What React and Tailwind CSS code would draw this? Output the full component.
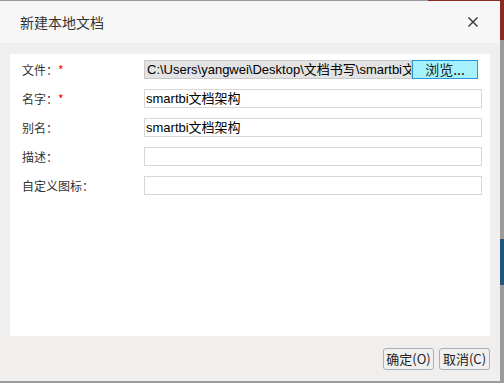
import React from "react";

const cjk = { fontFamily: '"Noto Sans CJK SC", "Liberation Sans", sans-serif' };
const mixed = { fontFamily: '"Liberation Sans", "Noto Sans CJK SC", sans-serif' };

const Field = ({ label, required, children }) => (
  <div className="flex h-[29px] items-center">
    <div className="w-[134px] shrink-0 pl-[12px] text-[12px] leading-none text-[#333]" style={cjk}>
      {label}
      {required && <span className="text-[#ff0000]">*</span>}
    </div>
    {children}
  </div>
);

const TextBox = ({ value = "" }) => (
  <div
    className="flex h-[19px] w-[338px] items-center border border-[#d9d7d3] bg-white px-[1px] text-[13px] text-black"
    style={mixed}
  >
    {value}
  </div>
);

export default function App() {
  return (
    <div className="flex h-[383px] w-[504px] overflow-hidden bg-[#9b9b9b]">
      {/* dialog */}
      <div className="flex h-[381px] w-[500px] flex-col">
        <div className="flex h-px">
          <div className="w-[428px] bg-[#9a9a9a]" />
          <div className="flex-1 bg-[#8b2a1f]" />
        </div>
        <div className="flex h-[42px] items-center justify-between bg-[#f7f7f7] pl-[20px] pr-[22px]">
          <span className="text-[14px] text-[#333]" style={cjk}>新建本地文档</span>
          <svg width="10" height="10" viewBox="0 0 10 10">
            <path d="M0.5 0.5 L9.5 9.5 M9.5 0.5 L0.5 9.5" stroke="#333" strokeWidth="1.4" />
          </svg>
        </div>
        <div className="flex flex-1 flex-col bg-[#f0efed] px-[10px] pt-[11px]">
          <div className="flex h-[282px] flex-col bg-white pt-px">
            <Field label="文件：" required>
              <div className="flex items-center">
                <div
                  className="h-[19px] w-[268px] overflow-hidden whitespace-nowrap border border-[#c8c8c8] bg-[#e3e3e3] pl-[2px] text-[13px] leading-[17px] text-black"
                  style={mixed}
                >
                  C:\Users\yangwei\Desktop\文档书写\smartbi文
                </div>
                <div
                  className="flex h-[19px] w-[66px] items-center justify-center border border-[#2a96d8] bg-[#a6f2fc] text-[14px] text-[#222]"
                  style={cjk}
                >
                  浏览...
                </div>
              </div>
            </Field>
            <Field label="名字：" required>
              <TextBox value="smartbi文档架构" />
            </Field>
            <Field label="别名：">
              <TextBox value="smartbi文档架构" />
            </Field>
            <Field label="描述：">
              <TextBox />
            </Field>
            <Field label="自定义图标：">
              <TextBox />
            </Field>
          </div>
          <div className="flex justify-end gap-[5px] pt-[12px]">
            <button
              className="flex h-[22px] w-[51px] items-center justify-center rounded-[3px] border border-[#a9b0bd] bg-[#f0f0f0] text-[13px] text-[#222]"
              style={cjk}
            >
              确定(O)
            </button>
            <button
              className="flex h-[22px] w-[51px] items-center justify-center rounded-[3px] border border-[#a9b0bd] bg-[#f0f0f0] text-[13px] text-[#222]"
              style={cjk}
            >
              取消(C)
            </button>
          </div>
        </div>
      </div>
      {/* backdrop strip */}
      <div className="flex w-[4px] flex-col">
        <div className="h-[40px] bg-[#8b2a1f]" />
        <div className="h-[199px] bg-[#9b9b9b]" />
        <div className="h-[46px] bg-[#1f5578]" />
        <div className="flex-1 bg-[#9b9b9b]" />
      </div>
    </div>
  );
}
